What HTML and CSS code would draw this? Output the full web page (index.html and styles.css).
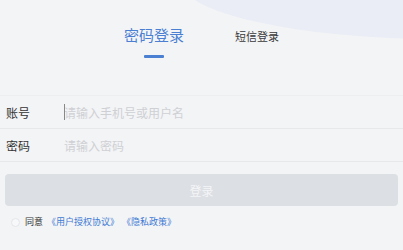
FILE: index.html
```html
<!DOCTYPE html>
<html lang="zh-CN">
<head>
<meta charset="utf-8">
<title>登录</title>
<link rel="stylesheet" href="styles.css">
</head>
<body>
<div class="page">
  <div class="blob"></div>
  <header class="header">
    <nav class="tabs">
      <div class="tab tab-active">
        <span class="tab-text">密码登录</span>
        <span class="tab-bar"></span>
      </div>
      <div class="tab">
        <span class="tab-text">短信登录</span>
      </div>
    </nav>
  </header>
  <form class="form">
    <label class="row">
      <span class="row-label">账号</span>
      <span class="field">
        <span class="caret"></span>
        <input class="input" type="text" placeholder="请输入手机号或用户名">
      </span>
    </label>
    <label class="row">
      <span class="row-label">密码</span>
      <span class="field">
        <input class="input" type="password" placeholder="请输入密码">
      </span>
    </label>
    <button class="submit" type="button">登录</button>
    <div class="agree">
      <span class="radio"></span>
      <span class="agree-text">同意</span>
      <a class="link link-first">《用户授权协议》</a><a class="link link-second">《隐私政策》</a>
    </div>
  </form>
</div>
</body>
</html>
```
FILE: styles.css
```css
* { box-sizing: border-box; }
html, body {
  margin: 0;
  padding: 0;
  background: #f3f4f6;
  font-family: "Noto Sans CJK SC", "Noto Sans", sans-serif;
  color: #333;
}
.page {
  position: relative;
  width: 403px;
  height: 250px;
  overflow: hidden;
}
.blob {
  position: absolute;
  left: 180px;
  top: -78px;
  width: 520px;
  height: 117px;
  border-radius: 50%;
  background: #eaedf5;
}
.header {
  position: relative;
  height: 95px;
  padding-top: 27px;
}
.tabs {
  display: flex;
  justify-content: center;
  align-items: baseline;
  gap: 51px;
}
.tab {
  display: flex;
  flex-direction: column;
  align-items: center;
}
.tab-text {
  font-size: 11px;
  line-height: 1;
  color: #3a3a3a;
}
.tab-active .tab-text {
  font-size: 15px;
  color: #4a7fd2;
}
.tab-bar {
  display: block;
  width: 20px;
  height: 3px;
  margin-top: 13px;
  background: #4a7fd2;
  border-radius: 1px;
}
.form {
  position: relative;
  margin: 0;
  border-top: 1px solid #eceef0;
}
.row {
  display: flex;
  align-items: center;
  height: 33px;
  border-bottom: 1px solid #e6e8ea;
}
.row-label {
  width: 64px;
  padding-left: 6px;
  font-size: 12px;
  color: #333;
}
.field {
  position: relative;
  flex: 1;
  display: flex;
  align-items: center;
  height: 32px;
}
.input {
  flex: 1;
  border: 0;
  padding: 0;
  margin: 0;
  background: transparent;
  font-family: "Noto Sans CJK SC", "Noto Sans", sans-serif;
  font-size: 12px;
  color: #333;
  outline: none;
}
.input::placeholder {
  color: #cfd0d4;
}
.caret {
  position: absolute;
  left: 0;
  top: 8px;
  width: 1px;
  height: 16px;
  background: #888;
}
.submit {
  display: block;
  width: calc(100% - 10px);
  height: 32px;
  margin: 12px 5px 0;
  border: 0;
  border-radius: 4px;
  background: #dcdfe3;
  color: #f4f5f7;
  font-family: "Noto Sans CJK SC", "Noto Sans", sans-serif;
  font-size: 12px;
}
.agree {
  display: flex;
  align-items: center;
  margin-top: 11px;
  padding-left: 11px;
  font-size: 9px;
  line-height: 10px;
}
.radio {
  width: 9px;
  height: 9px;
  border-radius: 50%;
  border: 1px solid #e4e6e9;
  background: #f7f8f9;
  margin-right: 5px;
}
.agree-text {
  color: #333;
}
.link {
  color: #3f7ad3;
}
.link-first {
  margin-left: 4px;
}
.link-second {
  margin-left: 3px;
}
```
